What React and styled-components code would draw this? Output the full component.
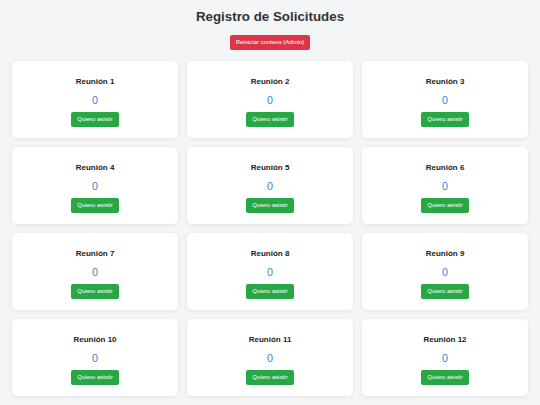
import React from "react";
import styled, { createGlobalStyle } from "styled-components";

const Global = createGlobalStyle`
  html, body { margin: 0; padding: 0; background: #f4f5f7; }
  body { font-family: "Liberation Sans", Arial, sans-serif; }
`;

const Page = styled.div`
  padding: 0 12px 12px;
  display: flex;
  flex-direction: column;
  align-items: center;
`;

const Title = styled.h1`
  margin: 9px 0 0;
  font-size: 13.33px;
  line-height: 15px;
  font-weight: bold;
  color: #333;
`;

const ResetButton = styled.button`
  margin-top: 11px;
  height: 15px;
  padding: 0 6px;
  border: none;
  border-radius: 2px;
  background: #dc3545;
  color: #fff;
  font-family: inherit;
  font-size: 6px;
  line-height: 15px;
  cursor: pointer;
`;

const Grid = styled.div`
  margin-top: 11px;
  width: 100%;
  display: grid;
  grid-template-columns: repeat(3, 1fr);
  gap: 9px;
`;

const Card = styled.div`
  background: #fff;
  border-radius: 5px;
  box-shadow: 0 1px 4px rgba(0, 0, 0, 0.08);
  padding: 16px 10px 11px;
  display: flex;
  flex-direction: column;
  align-items: center;
`;

const CardTitle = styled.h3`
  margin: 0;
  font-size: 8px;
  line-height: 9px;
  font-weight: bold;
  color: #222;
`;

const Count = styled.div`
  margin-top: 8px;
  font-size: 10.67px;
  line-height: 12px;
  color: #2f86e0;
`;

const AttendButton = styled.button`
  margin-top: 6px;
  height: 15px;
  padding: 0 6.5px;
  border: none;
  border-radius: 2px;
  background: #28a745;
  color: #fff;
  font-family: inherit;
  font-size: 6px;
  line-height: 15px;
  cursor: pointer;
`;

const meetings = Array.from({ length: 12 }, (_, i) => ({ id: i + 1, count: 0 }));

export default function App() {
  return (
    <>
      <Global />
      <Page>
        <Title>Registro de Solicitudes</Title>
        <ResetButton>Reiniciar conteos (Admin)</ResetButton>
        <Grid>
          {meetings.map((m) => (
            <Card key={m.id}>
              <CardTitle>Reunión {m.id}</CardTitle>
              <Count>{m.count}</Count>
              <AttendButton>Quiero asistir</AttendButton>
            </Card>
          ))}
        </Grid>
      </Page>
    </>
  );
}
